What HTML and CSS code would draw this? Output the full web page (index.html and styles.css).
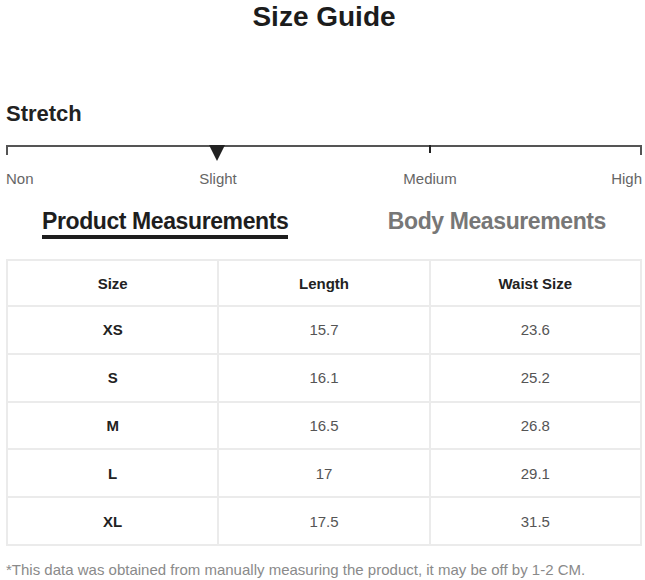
FILE: index.html
```html
<!DOCTYPE html>
<html lang="en">
<head>
<meta charset="utf-8">
<title>Size Guide</title>
<link rel="stylesheet" href="styles.css">
</head>
<body>
<main class="page">
  <h1 class="title">Size Guide</h1>

  <h2 class="stretch-title">Stretch</h2>
  <div class="scale">
    <span class="tick tick-start"></span>
    <span class="pointer"></span>
    <span class="tick tick-mid"></span>
    <span class="tick tick-end"></span>
  </div>
  <div class="scale-labels">
    <span class="lbl lbl-non">Non</span>
    <span class="lbl lbl-slight">Slight</span>
    <span class="lbl lbl-medium">Medium</span>
    <span class="lbl lbl-high">High</span>
  </div>

  <nav class="tabs">
    <span class="tab tab-active">Product Measurements</span>
    <span class="tab">Body Measurements</span>
  </nav>

  <table class="sizes">
    <thead>
      <tr><th>Size</th><th>Length</th><th>Waist Size</th></tr>
    </thead>
    <tbody>
      <tr><th>XS</th><td>15.7</td><td>23.6</td></tr>
      <tr><th>S</th><td>16.1</td><td>25.2</td></tr>
      <tr><th>M</th><td>16.5</td><td>26.8</td></tr>
      <tr><th>L</th><td>17</td><td>29.1</td></tr>
      <tr><th>XL</th><td>17.5</td><td>31.5</td></tr>
    </tbody>
  </table>

  <p class="note">*This data was obtained from manually measuring the product, it may be off by 1-2 CM.</p>
</main>
</body>
</html>
```

FILE: styles.css
```css
* { box-sizing: border-box; }

html, body {
  margin: 0;
  padding: 0;
  background: #ffffff;
}

body {
  font-family: "Liberation Sans", Arial, sans-serif;
  color: #222;
}

.page {
  padding: 0 3px 0 6px;
}

.title {
  margin: 0;
  padding-top: 1px;
  font-size: 28px;
  line-height: 32px;
  font-weight: 700;
  text-align: center;
  color: #1c1c1c;
}

.stretch-title {
  margin: 68px 0 0;
  font-size: 22px;
  line-height: 26px;
  font-weight: 700;
  color: #222;
}

.scale {
  position: relative;
  margin-top: 18px;
  height: 16px;
  border-top: 2px solid #555;
}

.tick {
  position: absolute;
  top: -2px;
  width: 2px;
  height: 10px;
  background: #555;
}
.tick-start { left: 0; }
.tick-mid { left: calc(66.666% - 1px); height: 8px; background: #222; }
.tick-end { right: 0; }

.pointer {
  position: absolute;
  top: -2px;
  left: calc(33.333% - 9px);
  width: 0;
  height: 0;
  border-left: 8.5px solid transparent;
  border-right: 8.5px solid transparent;
  border-top: 16px solid #222;
}

.scale-labels {
  display: grid;
  grid-template-columns: repeat(6, 1fr);
  margin-top: 9px;
  font-size: 15px;
  line-height: 18px;
  color: #666;
}
.lbl-non { grid-column: 1; text-align: left; }
.lbl-slight { grid-column: 2 / span 2; text-align: center; }
.lbl-medium { grid-column: 4 / span 2; text-align: center; }
.lbl-high { grid-column: 6; text-align: right; }

.tabs {
  display: flex;
  justify-content: space-between;
  align-items: flex-start;
  padding: 0 36px;
  margin-top: 20px;
}

.tab {
  font-size: 23px;
  line-height: 27px;
  letter-spacing: -0.4px;
  font-weight: 700;
  color: #777;
  border-bottom: 4px solid transparent;
}

.tab-active {
  color: #1e1e1e;
  border-bottom-color: #1e1e1e;
}

.sizes {
  width: 100%;
  margin-top: 20px;
  border-collapse: collapse;
  table-layout: fixed;
  font-size: 15px;
}

.sizes th,
.sizes td {
  height: 47.8px;
  border: 2px solid #ebebeb;
  text-align: center;
  vertical-align: middle;
  padding: 0;
}

.sizes thead th {
  height: 46px;
}

.sizes th {
  font-weight: 700;
  color: #222;
}

.sizes td {
  color: #555;
}

.note {
  margin: 15px 0 0;
  font-size: 15px;
  line-height: 18px;
  color: #8a8a8a;
}
```
